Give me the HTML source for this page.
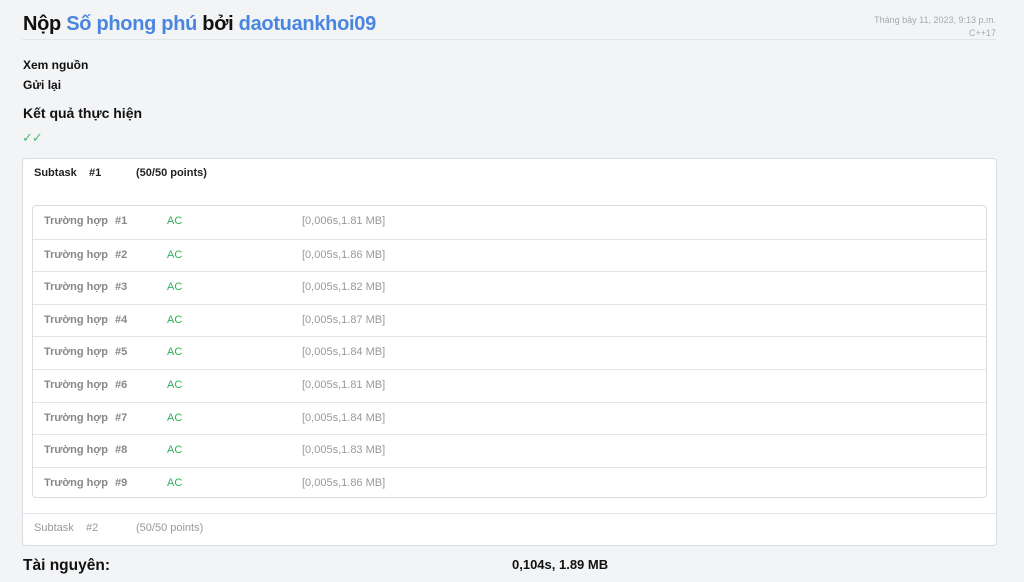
<!DOCTYPE html>
<html><head><meta charset="utf-8"><style>
*{margin:0;padding:0;box-sizing:border-box}
body{width:1024px;height:582px;overflow:hidden;background:#f3f4f6;font-family:"Liberation Sans",sans-serif;position:relative;color:#111}
.a{position:absolute;white-space:nowrap}
h1{position:absolute;left:23px;top:13px;font-size:20px;font-weight:bold;letter-spacing:-0.3px}
h1 span{color:#4a86e0}
.hr{position:absolute;left:22px;top:39px;width:974px;height:1px;background:#e2e4e8}
.box{position:absolute;left:22px;top:158px;width:975px;height:388px;background:#fff;border:1px solid #d9dce1;border-radius:4px}
.inner{position:absolute;left:32px;top:205px;width:955px;height:293px;border:1px solid #d9dce1;border-radius:4px}
.row{position:absolute;left:0;width:953px;height:33px;border-top:1px solid #e3e5e8;font-size:11px}
.row:first-child{border-top:none}
.row div{position:absolute;top:9px}
.g{color:#888;font-weight:bold}
.ac{color:#2fb05a}
.t{color:#999}
</style></head><body>
<h1>Nộp <span>Số phong phú</span> bởi <span>daotuankhoi09</span></h1>
<div class="a" style="right:28px;top:14px;font-size:9px;color:#a5a9b0;text-align:right;line-height:13px">Tháng bảy 11, 2023, 9:13 p.m.<br>C++17</div>
<div class="hr"></div>
<div class="a" style="left:23px;top:58px;font-size:12px;font-weight:bold">Xem nguồn</div>
<div class="a" style="left:23px;top:78px;font-size:12px;font-weight:bold">Gửi lại</div>
<div class="a" style="left:23px;top:105px;font-size:14px;font-weight:bold">Kết quả thực hiện</div>
<div class="a" style="left:22px;top:130px;font-size:13px;color:#4cbb6a;letter-spacing:-1px">✓✓</div>
<div class="box"></div>
<div class="a" style="left:34px;top:167px;font-size:11px;font-weight:bold;color:#222">Subtask &nbsp;&nbsp; #1</div>
<div class="a" style="left:136px;top:167px;font-size:11px;font-weight:bold;color:#222">(50/50 points)</div>
<div class="inner">
<div class="row" style="top:0"><div class="g" style="left:11px">Trường hợp</div><div class="g" style="left:82px">#1</div><div class="ac" style="left:134px">AC</div><div class="t" style="left:269px">[0,006s,1.81 MB]</div></div>
<div class="row" style="top:32.6px"><div class="g" style="left:11px">Trường hợp</div><div class="g" style="left:82px">#2</div><div class="ac" style="left:134px">AC</div><div class="t" style="left:269px">[0,005s,1.86 MB]</div></div>
<div class="row" style="top:65.2px"><div class="g" style="left:11px">Trường hợp</div><div class="g" style="left:82px">#3</div><div class="ac" style="left:134px">AC</div><div class="t" style="left:269px">[0,005s,1.82 MB]</div></div>
<div class="row" style="top:97.8px"><div class="g" style="left:11px">Trường hợp</div><div class="g" style="left:82px">#4</div><div class="ac" style="left:134px">AC</div><div class="t" style="left:269px">[0,005s,1.87 MB]</div></div>
<div class="row" style="top:130.4px"><div class="g" style="left:11px">Trường hợp</div><div class="g" style="left:82px">#5</div><div class="ac" style="left:134px">AC</div><div class="t" style="left:269px">[0,005s,1.84 MB]</div></div>
<div class="row" style="top:163px"><div class="g" style="left:11px">Trường hợp</div><div class="g" style="left:82px">#6</div><div class="ac" style="left:134px">AC</div><div class="t" style="left:269px">[0,005s,1.81 MB]</div></div>
<div class="row" style="top:195.6px"><div class="g" style="left:11px">Trường hợp</div><div class="g" style="left:82px">#7</div><div class="ac" style="left:134px">AC</div><div class="t" style="left:269px">[0,005s,1.84 MB]</div></div>
<div class="row" style="top:228.2px"><div class="g" style="left:11px">Trường hợp</div><div class="g" style="left:82px">#8</div><div class="ac" style="left:134px">AC</div><div class="t" style="left:269px">[0,005s,1.83 MB]</div></div>
<div class="row" style="top:260.8px"><div class="g" style="left:11px">Trường hợp</div><div class="g" style="left:82px">#9</div><div class="ac" style="left:134px">AC</div><div class="t" style="left:269px">[0,005s,1.86 MB]</div></div>
</div>
<div class="a" style="left:23px;top:513px;width:974px;height:1px;background:#e3e5e8"></div>
<div class="a" style="left:34px;top:522px;font-size:11px;color:#999">Subtask &nbsp;&nbsp; #2</div>
<div class="a" style="left:136px;top:522px;font-size:11px;color:#999">(50/50 points)</div>
<div class="a" style="left:23px;top:557px;font-size:15.5px;font-weight:bold">Tài nguyên:</div>
<div class="a" style="left:512px;top:557px;font-size:13px;font-weight:bold">0,104s, 1.89 MB</div>
</body></html>
